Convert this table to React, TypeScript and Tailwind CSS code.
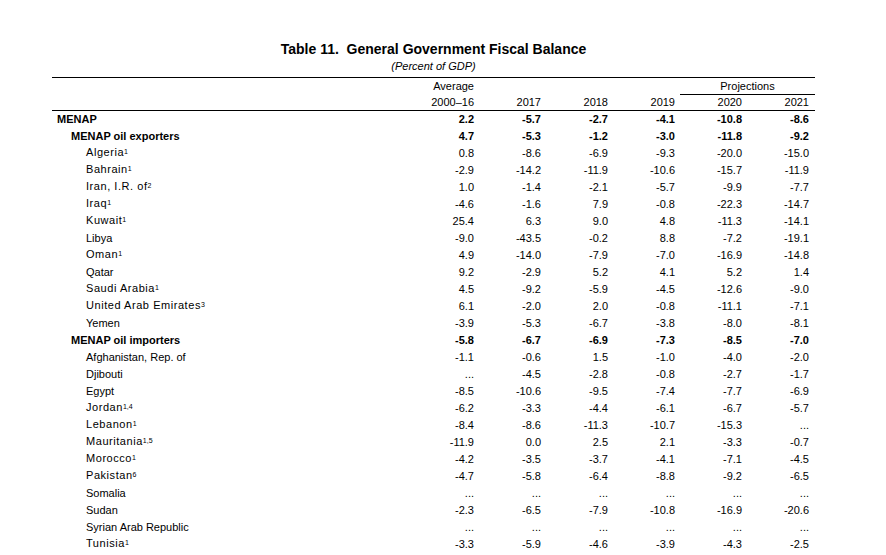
import React from 'react';

type Row = {
  label: string;
  level: 0 | 1 | 2;
  bold?: boolean;
  note?: string;
  values: string[];
};

const D = '...';

const rows: Row[] = [
  { label: 'MENAP', level: 0, bold: true, values: ['2.2', '-5.7', '-2.7', '-4.1', '-10.8', '-8.6'] },
  { label: 'MENAP oil exporters', level: 1, bold: true, values: ['4.7', '-5.3', '-1.2', '-3.0', '-11.8', '-9.2'] },
  { label: 'Algeria', level: 2, note: '1', values: ['0.8', '-8.6', '-6.9', '-9.3', '-20.0', '-15.0'] },
  { label: 'Bahrain', level: 2, note: '1', values: ['-2.9', '-14.2', '-11.9', '-10.6', '-15.7', '-11.9'] },
  { label: 'Iran, I.R. of', level: 2, note: '2', values: ['1.0', '-1.4', '-2.1', '-5.7', '-9.9', '-7.7'] },
  { label: 'Iraq', level: 2, note: '1', values: ['-4.6', '-1.6', '7.9', '-0.8', '-22.3', '-14.7'] },
  { label: 'Kuwait', level: 2, note: '1', values: ['25.4', '6.3', '9.0', '4.8', '-11.3', '-14.1'] },
  { label: 'Libya', level: 2, values: ['-9.0', '-43.5', '-0.2', '8.8', '-7.2', '-19.1'] },
  { label: 'Oman', level: 2, note: '1', values: ['4.9', '-14.0', '-7.9', '-7.0', '-16.9', '-14.8'] },
  { label: 'Qatar', level: 2, values: ['9.2', '-2.9', '5.2', '4.1', '5.2', '1.4'] },
  { label: 'Saudi Arabia', level: 2, note: '1', values: ['4.5', '-9.2', '-5.9', '-4.5', '-12.6', '-9.0'] },
  { label: 'United Arab Emirates', level: 2, note: '3', values: ['6.1', '-2.0', '2.0', '-0.8', '-11.1', '-7.1'] },
  { label: 'Yemen', level: 2, values: ['-3.9', '-5.3', '-6.7', '-3.8', '-8.0', '-8.1'] },
  { label: 'MENAP oil importers', level: 1, bold: true, values: ['-5.8', '-6.7', '-6.9', '-7.3', '-8.5', '-7.0'] },
  { label: 'Afghanistan, Rep. of', level: 2, values: ['-1.1', '-0.6', '1.5', '-1.0', '-4.0', '-2.0'] },
  { label: 'Djibouti', level: 2, values: [D, '-4.5', '-2.8', '-0.8', '-2.7', '-1.7'] },
  { label: 'Egypt', level: 2, values: ['-8.5', '-10.6', '-9.5', '-7.4', '-7.7', '-6.9'] },
  { label: 'Jordan', level: 2, note: '1,4', values: ['-6.2', '-3.3', '-4.4', '-6.1', '-6.7', '-5.7'] },
  { label: 'Lebanon', level: 2, note: '1', values: ['-8.4', '-8.6', '-11.3', '-10.7', '-15.3', D] },
  { label: 'Mauritania', level: 2, note: '1,5', values: ['-11.9', '0.0', '2.5', '2.1', '-3.3', '-0.7'] },
  { label: 'Morocco', level: 2, note: '1', values: ['-4.2', '-3.5', '-3.7', '-4.1', '-7.1', '-4.5'] },
  { label: 'Pakistan', level: 2, note: '6', values: ['-4.7', '-5.8', '-6.4', '-8.8', '-9.2', '-6.5'] },
  { label: 'Somalia', level: 2, values: [D, D, D, D, D, D] },
  { label: 'Sudan', level: 2, values: ['-2.3', '-6.5', '-7.9', '-10.8', '-16.9', '-20.6'] },
  { label: 'Syrian Arab Republic', level: 2, values: [D, D, D, D, D, D] },
  { label: 'Tunisia', level: 2, note: '1', values: ['-3.3', '-5.9', '-4.6', '-3.9', '-4.3', '-2.5'] },
];

const indent = ['pl-[5px]', 'pl-[19px]', 'pl-[34px]'];
const cols = 'grid grid-cols-[355px_67px_67px_67px_67px_67px_73px]';

export default function App() {
  return (
    <div className="min-h-screen bg-white text-black font-['Liberation_Sans',Arial,sans-serif] pt-[40px]">
      <div className="ml-[52px] w-[763px]">
        {/* Title */}
        <h1 className="text-center text-[14px] leading-[18px] font-bold">
          Table 11.&nbsp; General Government Fiscal Balance
        </h1>
        <p className="mt-px text-center text-[11px] leading-[14px] italic">(Percent of GDP)</p>

        {/* Header */}
        <div className="mt-[4px] border-t border-b border-black text-[11px]">
          <div className={`${cols} h-[17px] leading-[16px]`}>
            <div />
            <div className="text-right">Average</div>
            <div />
            <div />
            <div />
            <div className="col-span-2 ml-[5px] border-b border-black text-center">Projections</div>
          </div>
          <div className={`${cols} h-[15px] leading-[15px]`}>
            <div />
            <div className="text-right">2000–16</div>
            <div className="text-right">2017</div>
            <div className="text-right">2018</div>
            <div className="text-right">2019</div>
            <div className="text-right">2020</div>
            <div className="text-right pr-[6px]">2021</div>
          </div>
        </div>

        {/* Body */}
        <div className="text-[11px]">
          {rows.map((r) => (
            <div key={r.label} className={`${cols} h-[17px] leading-[17px] ${r.bold ? 'font-bold' : ''}`}>
              <div className={`${indent[r.level]} flex items-center whitespace-nowrap`}>
                {r.note ? (
                  <span className="tracking-[0.55px] leading-[14px] pb-[3px]">
                    {r.label}
                    <sup className="text-[7px] top-[-2px] tracking-normal">{r.note}</sup>
                  </span>
                ) : (
                  <span>{r.label}</span>
                )}
              </div>
              {r.values.map((v, i) => (
                <div key={i} className={`text-right ${i === 5 ? 'pr-[6px]' : ''}`}>
                  {v}
                </div>
              ))}
            </div>
          ))}
        </div>
      </div>
    </div>
  );
}
